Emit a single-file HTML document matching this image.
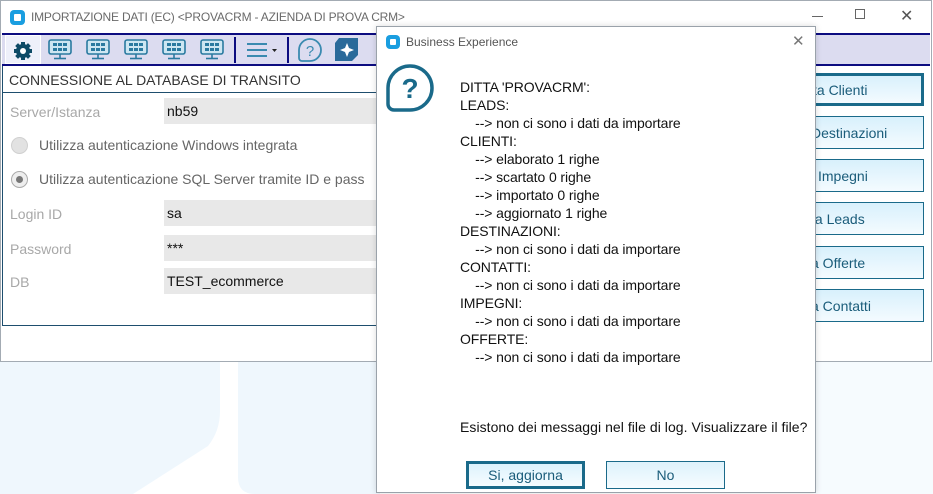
<!DOCTYPE html>
<html><head><meta charset="utf-8"><style>
*{box-sizing:border-box;margin:0;padding:0}
body{width:933px;height:494px;overflow:hidden;background:#fff;font-family:"Liberation Sans",sans-serif;position:relative}
.abs{position:absolute}
.bg3{left:815px;top:361px;width:118px;height:133px;background:#f6fbfe}
.win{left:0;top:0;width:932px;height:362px;border:1px solid #a3abb3;background:#fff}
.title{left:31px;top:10px;font-size:12px;color:#6a6a6a;letter-spacing:-0.2px}
.tb{left:2px;top:33px;width:928px;height:33px;background:#dcdcf0;border-top:2px solid #0c0c80;border-bottom:2px solid #0c0c80}
.lbl{font-size:14px;color:#a8a8a8;left:10px}
.inp{left:164px;width:215px;height:26px;background:#e8e8e8;font-size:14px;color:#111;padding:5px 0 0 3px}
.btn{left:800px;width:124px;height:33px;border:1px solid #1a6a8a;background:linear-gradient(#d8f0fc,#f4fbff);color:#1a5c7a;font-size:14px;padding:8px 0 0 10px}
.dlg{left:376px;top:26px;width:440px;height:467px;background:#fff;border:1px solid #9aa2aa;box-shadow:0 0 6px rgba(0,0,0,.15)}
.msg{left:460px;top:78px;font-size:14px;line-height:18px;color:#111;white-space:pre;letter-spacing:-0.1px}
.db{top:461px;width:119px;height:28px;border:1px solid #1a6a8a;background:linear-gradient(#ddf2fc,#f6fcff);color:#1a5c7a;font-size:14px;text-align:center;padding-top:5px}
</style></head><body>
<svg class="abs" style="left:0;top:361px" width="380" height="133"><path d="M0 0H220V50Q220 70 208 85L133 133H0Z" fill="#eff7fd"/><path d="M238 0H380V133H255Q238 133 238 116Z" fill="#eff7fd"/></svg>
<div class="abs bg3"></div>
<div class="abs win"></div>
<svg class="abs" style="left:9px;top:9px" width="17" height="17"><rect x="1" y="1" width="15" height="15" rx="4" fill="#1a9ee0"/><rect x="5" y="5" width="7" height="7" rx="1" fill="#fff"/></svg>
<div class="abs title">IMPORTAZIONE DATI (EC) &lt;PROVACRM - AZIENDA DI PROVA CRM&gt;</div>
<div class="abs" style="left:855px;top:9px;width:10px;height:10px;border:1px solid #666"></div>
<div class="abs" style="left:812px;top:16px;width:11px;height:1px;background:#666"></div>
<div class="abs" style="left:900px;top:6px;font-size:16px;color:#555">✕</div>
<div class="abs tb"></div>
<div class="abs" style="left:5px;top:35px;width:36px;height:29px;background:#eef0fa;border:1px solid #fff"></div>
<svg class="abs" style="left:12px;top:40px" width="22" height="22" viewBox="0 0 22 22"><g fill="#0d4a66"><circle cx="11" cy="11" r="7"/><g stroke="#0d4a66" stroke-width="4"><line x1="11" y1="2" x2="11" y2="20"/><line x1="2" y1="11" x2="20" y2="11"/><line x1="4.6" y1="4.6" x2="17.4" y2="17.4"/><line x1="17.4" y1="4.6" x2="4.6" y2="17.4"/></g></g><circle cx="11" cy="11" r="3" fill="#fff"/></svg>
<svg class="abs" style="left:47px;top:38px" width="190" height="24"><g id="m" fill="none" stroke="#2a7aa0" stroke-width="1.6"><rect x="2" y="2" width="22" height="14" rx="2" fill="#cde6f2"/><line x1="13" y1="16" x2="13" y2="20"/><line x1="7" y1="20.5" x2="19" y2="20.5"/><g fill="#2a7aa0" stroke="none"><rect x="6" y="5" width="4" height="3"/><rect x="11" y="5" width="4" height="3"/><rect x="16" y="5" width="4" height="3"/><rect x="6" y="10" width="4" height="3"/><rect x="11" y="10" width="4" height="3"/><rect x="16" y="10" width="4" height="3"/></g></g><use href="#m" x="38"/><use href="#m" x="76"/><use href="#m" x="114"/><use href="#m" x="152"/></svg>
<div class="abs" style="left:234px;top:37px;width:2px;height:26px;background:#0c0c80"></div>
<svg class="abs" style="left:245px;top:40px" width="36" height="20"><g stroke="#3a8ab0" stroke-width="2"><line x1="2" y1="4" x2="22" y2="4"/><line x1="2" y1="10" x2="22" y2="10"/><line x1="2" y1="16" x2="22" y2="16"/></g><path d="M27 9h5l-2.5 3z" fill="#222"/></svg>
<div class="abs" style="left:287px;top:37px;width:2px;height:26px;background:#0c0c80"></div>
<svg class="abs" style="left:297px;top:37px" width="26" height="26"><path d="M13 2a11 11 0 1 1 0 22H5a3 3 0 0 1-3-3v-8A11 11 0 0 1 13 2z" fill="none" stroke="#3a8ab0" stroke-width="1.8"/><text x="13" y="19" font-size="15" font-family="Liberation Sans" fill="#3a8ab0" text-anchor="middle">?</text></svg>
<div class="abs" style="left:334px;top:37px;width:25px;height:25px"><svg width="25" height="25"><path d="M5 1h19v17l-6 6H1V6z" fill="#2a6a9a"/><path d="M13 6l2 5 5 2-5 2-2 5-2-5-5-2 5-2z" fill="#fff"/></svg></div>
<div class="abs" style="left:2px;top:66px;width:376px;height:260px;border:1px solid #1e4e6e;border-top:none"></div>
<div class="abs" style="left:9px;top:72px;font-size:14px;color:#333">CONNESSIONE AL DATABASE DI TRANSITO</div>
<div class="abs" style="left:2px;top:92px;width:376px;height:1px;background:#1e4e6e"></div>
<div class="abs lbl" style="top:104px">Server/Istanza</div>
<div class="abs inp" style="top:98px">nb59</div>
<div class="abs" style="left:11px;top:137px;width:17px;height:17px;border-radius:50%;background:#e2e2e2;border:1px solid #d0d0d0"></div>
<div class="abs" style="left:39px;top:137px;font-size:14px;color:#666">Utilizza autenticazione Windows integrata</div>
<div class="abs" style="left:11px;top:171px;width:17px;height:17px;border-radius:50%;background:#eee;border:1px solid #aaa"></div>
<div class="abs" style="left:16px;top:176px;width:7px;height:7px;border-radius:50%;background:#777"></div>
<div class="abs" style="left:39px;top:171px;font-size:14px;color:#666;white-space:nowrap">Utilizza autenticazione SQL Server tramite ID e pass</div>
<div class="abs lbl" style="top:206px">Login ID</div>
<div class="abs inp" style="top:200px">sa</div>
<div class="abs lbl" style="top:241px">Password</div>
<div class="abs inp" style="top:235px">***</div>
<div class="abs lbl" style="top:274px">DB</div>
<div class="abs inp" style="top:268px">TEST_ecommerce</div>
<div class="abs btn" style="top:73px;border:3px solid #1a6a8a;padding-top:6px">ta Clienti</div>
<div class="abs btn" style="top:116px">Destinazioni</div>
<div class="abs btn" style="top:159px">i Impegni</div>
<div class="abs btn" style="top:202px">ta Leads</div>
<div class="abs btn" style="top:246px">a Offerte</div>
<div class="abs btn" style="top:289px">a Contatti</div>
<div class="abs dlg"></div>
<svg class="abs" style="left:385px;top:34px" width="16" height="16"><rect x="1" y="1" width="14" height="14" rx="4" fill="#1a9ee0"/><rect x="5" y="5" width="6" height="6" rx="1" fill="#fff"/></svg>
<div class="abs" style="left:406px;top:35px;font-size:12px;color:#555">Business Experience</div>
<div class="abs" style="left:792px;top:32px;font-size:15px;color:#777">✕</div>
<svg class="abs" style="left:385px;top:63px" width="50" height="50"><path d="M25 3a22 22 0 1 1 0 44H9a6 6 0 0 1-6-6V25A22 22 0 0 1 25 3z" fill="none" stroke="#1a6a8a" stroke-width="3.5"/><text x="25" y="35" font-size="28" font-weight="bold" font-family="Liberation Sans" fill="#1a6a8a" text-anchor="middle">?</text></svg>
<div class="abs msg">DITTA 'PROVACRM':
LEADS:
    --&gt; non ci sono i dati da importare
CLIENTI:
    --&gt; elaborato 1 righe
    --&gt; scartato 0 righe
    --&gt; importato 0 righe
    --&gt; aggiornato 1 righe
DESTINAZIONI:
    --&gt; non ci sono i dati da importare
CONTATTI:
    --&gt; non ci sono i dati da importare
IMPEGNI:
    --&gt; non ci sono i dati da importare
OFFERTE:
    --&gt; non ci sono i dati da importare</div>
<div class="abs" style="left:460px;top:419px;font-size:14px;color:#111;letter-spacing:0.05px;white-space:nowrap">Esistono dei messaggi nel file di log. Visualizzare il file?</div>
<div class="abs db" style="left:466px;border:3px solid #1a6a8a;padding-top:3px">Si, aggiorna</div>
<div class="abs db" style="left:606px">No</div>
</body></html>
